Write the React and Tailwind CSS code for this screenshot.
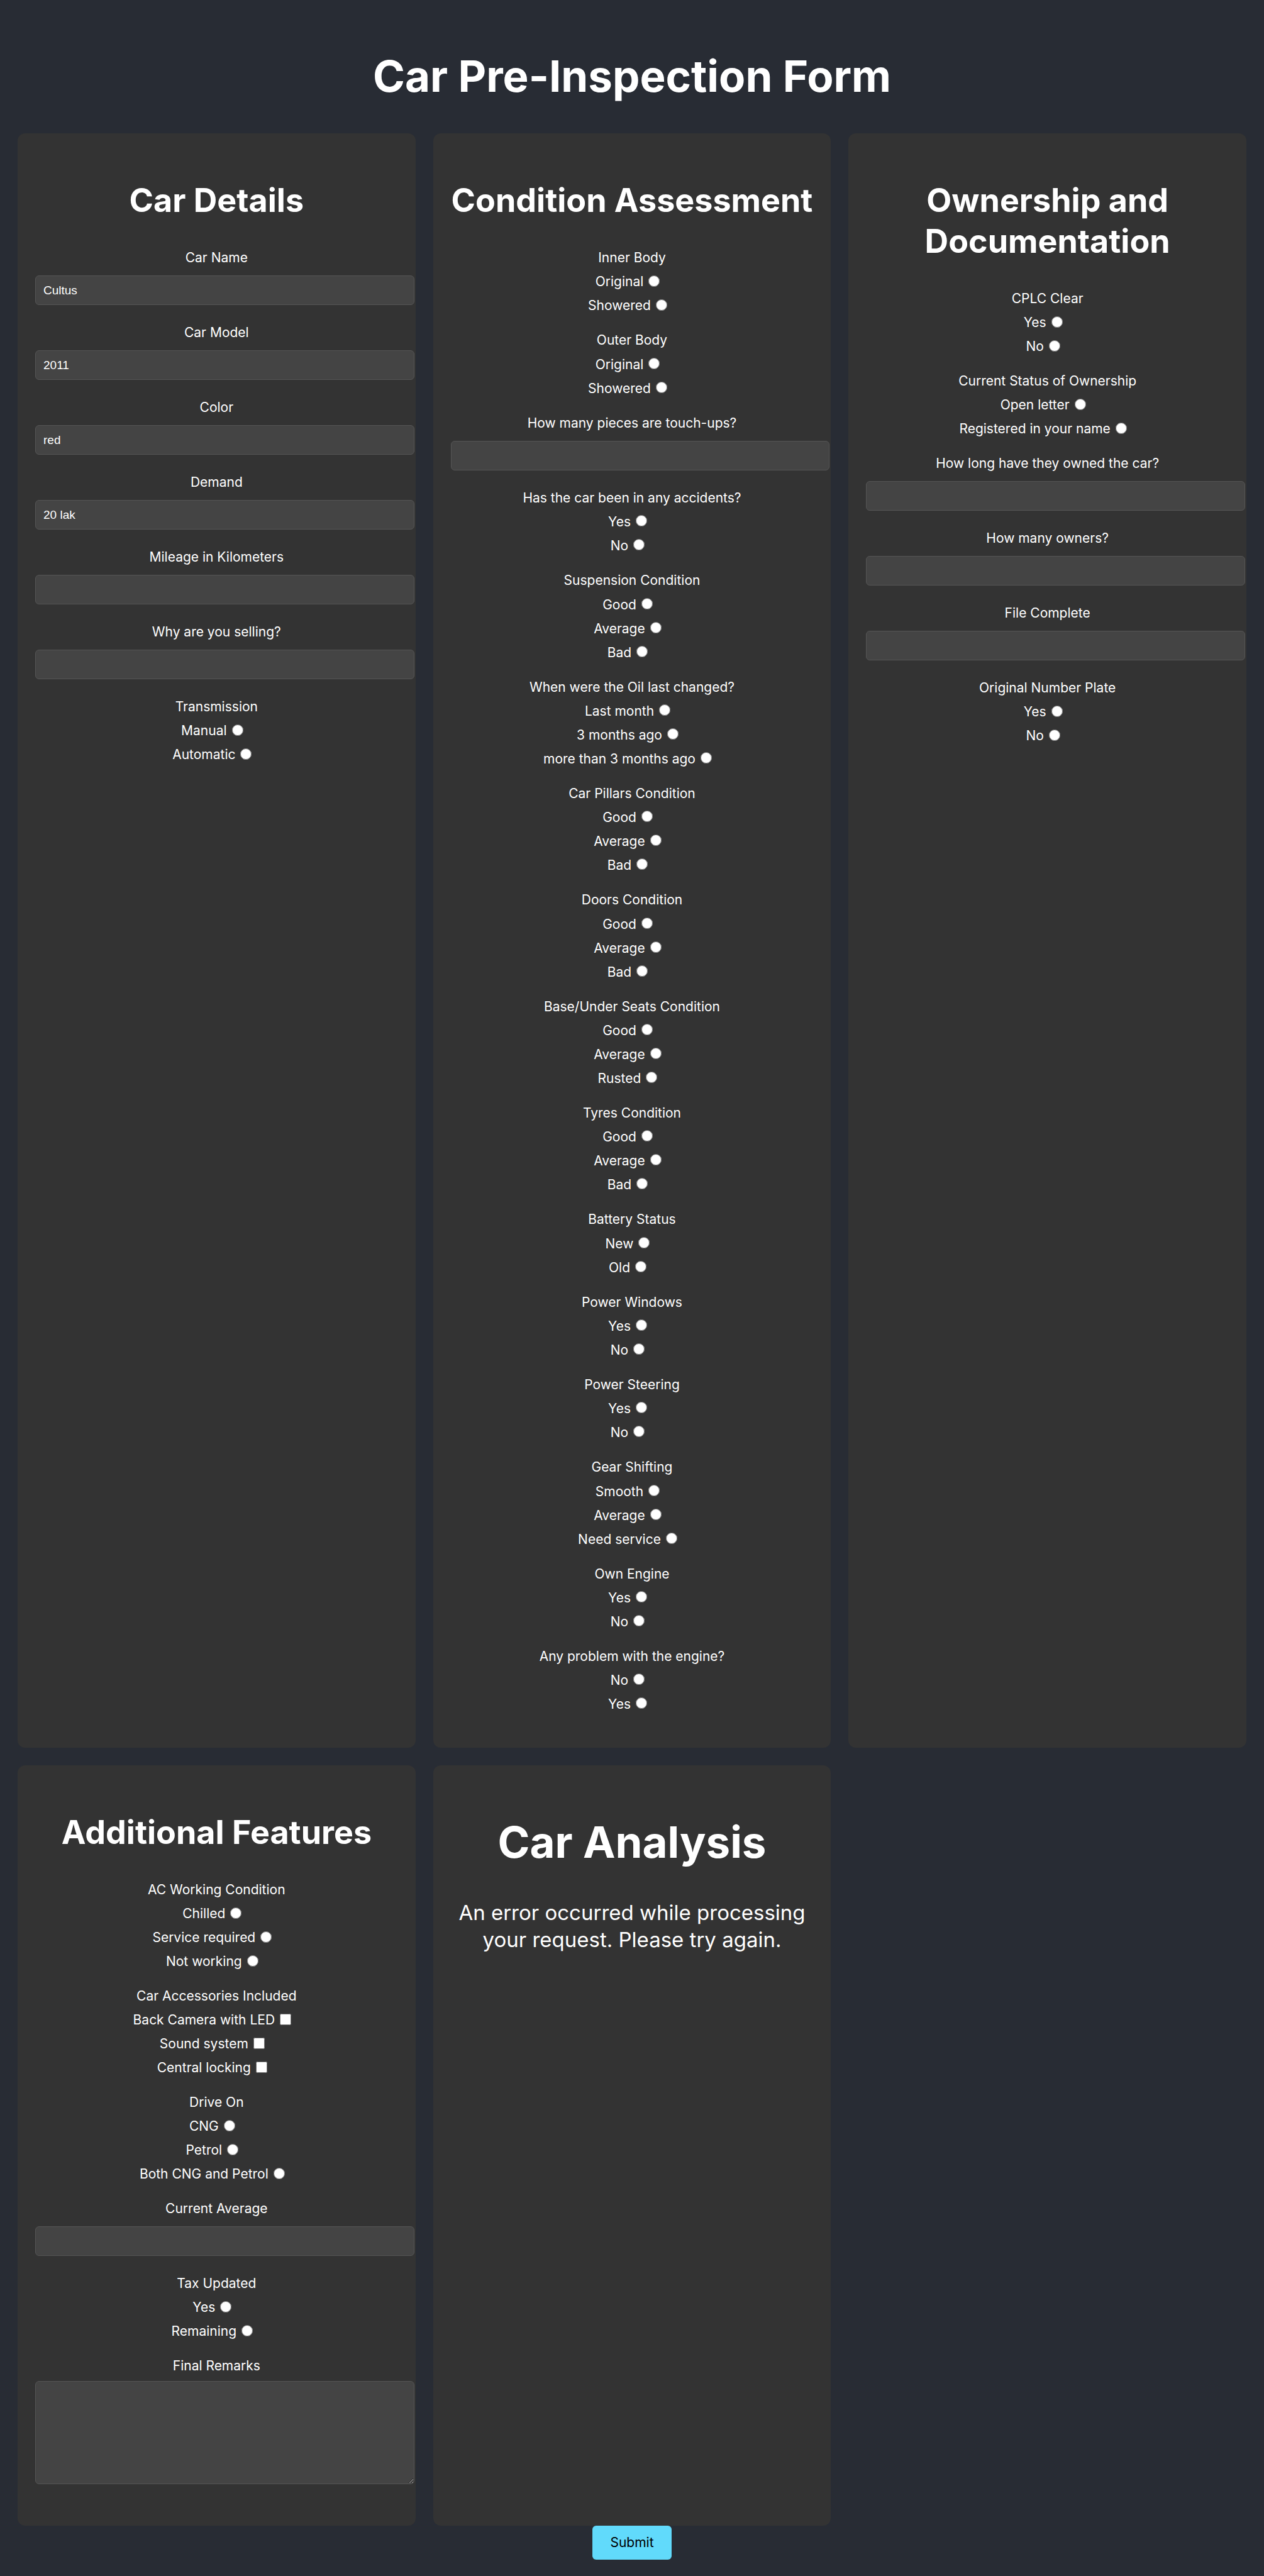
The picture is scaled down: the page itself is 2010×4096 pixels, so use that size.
import React, { useId } from "react";

const carDetails = [
  { label: "Car Name", value: "Cultus" },
  { label: "Car Model", value: "2011" },
  { label: "Color", value: "red" },
  { label: "Demand", value: "20 lak" },
  { label: "Mileage in Kilometers" },
  { label: "Why are you selling?" },
  { label: "Transmission", options: ["Manual", "Automatic"] },
];

const condition = [
  { label: "Inner Body", options: ["Original", "Showered"] },
  { label: "Outer Body", options: ["Original", "Showered"] },
  { label: "How many pieces are touch-ups?" },
  { label: "Has the car been in any accidents?", options: ["Yes", "No"] },
  { label: "Suspension Condition", options: ["Good", "Average", "Bad"] },
  {
    label: "When were the Oil last changed?",
    options: ["Last month", "3 months ago", "more than 3 months ago"],
  },
  { label: "Car Pillars Condition", options: ["Good", "Average", "Bad"] },
  { label: "Doors Condition", options: ["Good", "Average", "Bad"] },
  { label: "Base/Under Seats Condition", options: ["Good", "Average", "Rusted"] },
  { label: "Tyres Condition", options: ["Good", "Average", "Bad"] },
  { label: "Battery Status", options: ["New", "Old"] },
  { label: "Power Windows", options: ["Yes", "No"] },
  { label: "Power Steering", options: ["Yes", "No"] },
  { label: "Gear Shifting", options: ["Smooth", "Average", "Need service"] },
  { label: "Own Engine", options: ["Yes", "No"] },
  { label: "Any problem with the engine?", options: ["No", "Yes"] },
];

const ownership = [
  { label: "CPLC Clear", options: ["Yes", "No"] },
  {
    label: "Current Status of Ownership",
    options: ["Open letter", "Registered in your name"],
  },
  { label: "How long have they owned the car?" },
  { label: "How many owners?" },
  { label: "File Complete" },
  { label: "Original Number Plate", options: ["Yes", "No"] },
];

const features = [
  {
    label: "AC Working Condition",
    options: ["Chilled", "Service required", "Not working"],
  },
  {
    label: "Car Accessories Included",
    type: "checkbox",
    options: ["Back Camera with LED", "Sound system", "Central locking"],
  },
  { label: "Drive On", options: ["CNG", "Petrol", "Both CNG and Petrol"] },
  { label: "Current Average" },
  { label: "Tax Updated", options: ["Yes", "Remaining"] },
  { label: "Final Remarks", type: "textarea" },
];

const fieldStyle =
  "block box-content rounded-md border border-[#555] bg-[#444] px-3 font-['Liberation_Sans',sans-serif] text-[19px] text-white outline-none";

function Choices({ label, options, type = "radio" }) {
  const name = useId();
  return (
    <fieldset>
      <legend className="block w-full leading-[39px]">{label}</legend>
      {options.map((option) => (
        <label
          key={option}
          className="mr-[14px] flex h-[38px] items-center justify-center gap-2"
        >
          {option}
          <input
            type={type}
            name={name}
            value={option}
            className="mb-[3px] size-[18px] shrink-0"
          />
        </label>
      ))}
    </fieldset>
  );
}

function TextField({ label, value = "" }) {
  const id = useId();
  return (
    <div className="pb-2">
      <label htmlFor={id} className="block leading-[39px]">
        {label}
      </label>
      <input
        id={id}
        type="text"
        defaultValue={value}
        className={`mt-[9px] h-[45px] w-full ${fieldStyle}`}
      />
    </div>
  );
}

function TextArea({ label }) {
  const id = useId();
  return (
    <div className="pb-4">
      <label htmlFor={id} className="block leading-[39px]">
        {label}
      </label>
      <textarea
        id={id}
        className={`mt-[5px] h-[138px] w-full resize py-3 ${fieldStyle}`}
      />
    </div>
  );
}

function Question(props) {
  if (props.type === "textarea") return <TextArea {...props} />;
  if (props.options) return <Choices {...props} />;
  return <TextField {...props} />;
}

function Card({ title, questions, spread }) {
  return (
    <section className="flex min-w-0 flex-col rounded-xl bg-[#333] px-7 pt-[74px] pb-[50px]">
      <h2 className="mb-[39px] text-[52px] leading-[65px] font-bold">{title}</h2>
      <div
        className={
          spread
            ? "flex grow flex-col justify-between gap-4"
            : "flex flex-col gap-4"
        }
      >
        {questions.map((question) => (
          <Question key={question.label} {...question} />
        ))}
      </div>
    </section>
  );
}

export default function App() {
  return (
    <form
      onSubmit={(event) => event.preventDefault()}
      className="flex min-h-screen flex-col bg-[#282c34] px-7 pb-[26px] text-center font-[Inter,sans-serif] text-[21px] text-white"
    >
      <h1 className="mt-[78px] mb-[47px] text-[69px] leading-[87px] font-bold">
        Car Pre-Inspection Form
      </h1>
      <div className="grid grow grid-cols-3 grid-rows-[1fr_auto] gap-7">
        <Card title="Car Details" questions={carDetails} />
        <Card title="Condition Assessment" questions={condition} spread />
        <Card title="Ownership and Documentation" questions={ownership} />
        <Card title="Additional Features" questions={features} />
        <section className="rounded-xl bg-[#333] px-7 pt-[79px]">
          <h2 className="text-[69px] leading-[87px] font-bold">Car Analysis</h2>
          <p className="mt-[47px] text-[33px] leading-[43px]">
            An error occurred while processing your request. Please try again.
          </p>
        </section>
      </div>
      <button
        type="submit"
        className="h-[54px] self-center rounded-md bg-[#61dafb] px-7 text-black"
      >
        Submit
      </button>
    </form>
  );
}
